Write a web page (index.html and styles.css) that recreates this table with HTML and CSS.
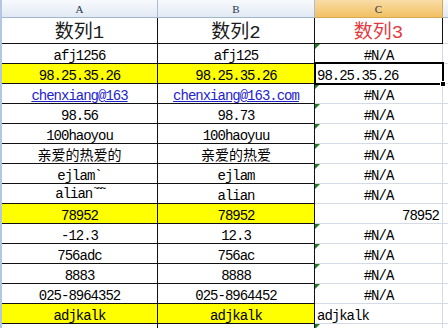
FILE: index.html
```html
<!DOCTYPE html>
<html lang="zh">
<head>
<meta charset="utf-8">
<title>数列</title>
<link rel="stylesheet" href="styles.css">
</head>
<body>
<div class="sheet">
  <div class="h">A</div><div class="h">B</div><div class="h hs">C</div><div class="h hd"></div>

  <div class="c b big">数列1</div><div class="c b big">数列2</div><div class="c b big red">数列3</div><div class="c g d"></div>

  <div class="c b">afj1256</div><div class="c b">afj125</div><div class="c g t">#N/A</div><div class="c g d"></div>
  <div class="c b y">98.25.35.26</div><div class="c b y">98.25.35.26</div><div class="c g l cur">98.25.35.26<span class="selbox"></span><span class="handle"></span></div><div class="c g d"></div>
  <div class="c b"><span class="link">chenxiang@163</span></div><div class="c b"><span class="link">chenxiang@163.com</span></div><div class="c g t">#N/A</div><div class="c g d"></div>
  <div class="c b">98.56</div><div class="c b">98.73</div><div class="c g t">#N/A</div><div class="c g d"></div>
  <div class="c b">100haoyou</div><div class="c b">100haoyuu</div><div class="c g t">#N/A</div><div class="c g d"></div>
  <div class="c b cjk">亲爱的热爱的</div><div class="c b cjk">亲爱的热爱</div><div class="c g t">#N/A</div><div class="c g d"></div>
  <div class="c b">ejlam`</div><div class="c b">ejlam</div><div class="c g t">#N/A</div><div class="c g d"></div>
  <div class="c b"><span>alian<span class="tl">~~~</span></span></div><div class="c b">alian</div><div class="c g t">#N/A</div><div class="c g d"></div>
  <div class="c b y">78952</div><div class="c b y">78952</div><div class="c g r">78952</div><div class="c g d"></div>
  <div class="c b">-12.3</div><div class="c b">12.3</div><div class="c g t">#N/A</div><div class="c g d"></div>
  <div class="c b">756adc</div><div class="c b">756ac</div><div class="c g t">#N/A</div><div class="c g d"></div>
  <div class="c b">8883</div><div class="c b">8888</div><div class="c g t">#N/A</div><div class="c g d"></div>
  <div class="c b">025-8964352</div><div class="c b">025-8964452</div><div class="c g t">#N/A</div><div class="c g d"></div>
  <div class="c b y">adjkalk</div><div class="c b y">adjkalk</div><div class="c g l">adjkalk</div><div class="c g d"></div>
  <div class="c b"></div><div class="c b"></div><div class="c g t"></div><div class="c g d"></div>
</div>
</body>
</html>
```

FILE: styles.css
```css
html, body {
  margin: 0;
  padding: 0;
  background: #ffffff;
}

.sheet {
  display: grid;
  grid-template-columns: 156px 157px 128px 1fr;
  grid-template-rows: 18px 26px;
  grid-auto-rows: 20px;
  width: 448px;
  height: 328px;
  overflow: hidden;
  box-sizing: border-box;
  border-left: 2px solid #b3c6e2;
  font-family: "Liberation Mono", "Noto Sans CJK SC", monospace;
  font-size: 14px;
  letter-spacing: -1px;
  color: #000;
}

.h {
  box-sizing: border-box;
  display: flex;
  align-items: center;
  justify-content: center;
  background: linear-gradient(#f7fafd, #e2e9f3);
  border-right: 1px solid #a9bcd6;
  border-bottom: 1px solid #9eb6ce;
  font-family: "Liberation Serif", serif;
  font-size: 11px;
  letter-spacing: 0;
  color: #27354a;
  padding-top: 1px;
}

.hs {
  background: linear-gradient(#f9dca6, #f1c162);
  border-right-color: #d9a952;
  border-bottom-color: #d9a952;
}

.hd {
  border-right: 0;
}

.c {
  box-sizing: border-box;
  position: relative;
  display: flex;
  align-items: flex-end;
  justify-content: center;
  white-space: nowrap;
  line-height: 12px;
  padding-bottom: 1px;
}

.b {
  border-right: 1px solid #111;
  border-bottom: 1px solid #111;
}

.g {
  border-right: 1px solid #d4dae6;
  border-bottom: 1px solid #d4dae6;
}

.d {
  border-right: 0;
}

.big {
  font-size: 19px;
  letter-spacing: 0;
  line-height: 20px;
  padding-bottom: 0;
  color: #1a1a1a;
  border-right-color: #111;
  border-bottom-color: #111;
}

.red {
  color: #e3393f;
}

.cjk {
  letter-spacing: 0;
  line-height: 14px;
  padding-bottom: 0;
}

.y {
  background: #ffff00;
}

.l {
  justify-content: flex-start;
  padding-left: 2px;
}

.r {
  justify-content: flex-end;
  padding-right: 3px;
}

.link {
  color: #2323cc;
  text-decoration: underline;
}

.tl {
  position: relative;
  top: -6px;
  font-size: 10px;
  letter-spacing: -2.5px;
  margin-left: 1px;
}

.t::before {
  content: "";
  position: absolute;
  left: 0;
  top: 0;
  border-top: 5px solid #1f7a23;
  border-right: 5px solid transparent;
}

.selbox {
  position: absolute;
  left: -1px;
  right: -2px;
  top: -2px;
  bottom: -2px;
  border: 2px solid #000;
  z-index: 2;
}

.handle {
  position: absolute;
  right: -4px;
  bottom: -4px;
  width: 4px;
  height: 4px;
  background: #000;
  border: 1px solid #fff;
  z-index: 3;
}
```
